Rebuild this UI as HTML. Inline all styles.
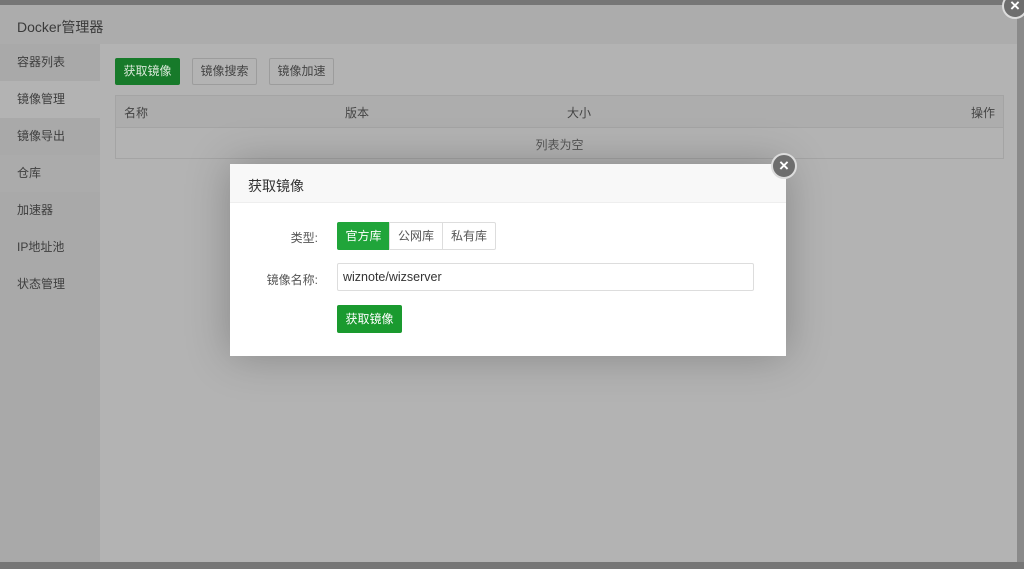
<!DOCTYPE html>
<html><head><meta charset="utf-8"><style>
*{margin:0;padding:0;box-sizing:border-box}
body{width:1024px;height:569px;overflow:hidden;background:#767676;font-family:"Liberation Sans","Noto Sans CJK SC",sans-serif;font-size:12px;color:#444;position:relative}
.panel{position:absolute;left:0;top:5px;width:1017px;height:557px;background:#b3b3b3}
.hdr{height:39px;background:#acacac;color:#3a3a3a;font-size:14px;padding:12px 0 0 17px}
.side{position:absolute;left:0;top:39px;width:100px;bottom:0;background:#a9a9a9}
.side div{height:37px;line-height:37px;padding-left:17px;color:#3e3e3e;font-size:12px}
.side .act{background:#b3b3b3}
.btn{position:absolute;height:27px;line-height:25px;border:1px solid #9c9c9c;border-radius:2px;color:#444;text-align:center;font-size:12px}
.tbl{position:absolute;left:115px;top:90px;width:889px;height:64px;border:1px solid #a4a4a4}
.th{height:32px;background:#adadad;border-bottom:1px solid #a4a4a4;position:relative}
.th span{position:absolute;top:8px;color:#444}
.right{position:absolute;left:1017px;top:5px;width:7px;height:557px;background:#8a8a8a}
.x{position:absolute;width:26px;height:26px;border-radius:50%;background:#6e6e6e;border:2px solid #ddd;color:#fff;font-size:17px;line-height:21px;text-align:center;font-weight:bold}
.modal{position:absolute;left:230px;top:164px;width:556px;height:192px;background:#fff;box-shadow:0 0 40px rgba(0,0,0,.25)}
.mh{height:39px;background:#f8f8f8;border-bottom:1px solid #eee;padding:12px 0 0 18px;font-size:14px;color:#333}
.lbl{position:absolute;right:468px;color:#555}
.seg{position:absolute;top:58px;height:28px;line-height:26px;border:1px solid #ddd;text-align:center;color:#555}
</style></head><body>
<div class="panel">
<div class="hdr">Docker管理器</div>
<div class="side"><div>容器列表</div><div class="act">镜像管理</div><div>镜像导出</div><div style="background:#ababab">仓库</div><div>加速器</div><div>IP地址池</div><div>状态管理</div></div>
<div class="btn" style="left:115px;top:53px;width:65px;background:#177a2a;border-color:#177a2a;color:#d8e8d8">获取镜像</div>
<div class="btn" style="left:192px;top:53px;width:65px">镜像搜索</div>
<div class="btn" style="left:269px;top:53px;width:65px">镜像加速</div>
<div class="tbl"><div class="th"><span style="left:8px">名称</span><span style="left:229px">版本</span><span style="left:451px">大小</span><span style="right:8px">操作</span></div>
<div style="text-align:center;padding-top:8px;color:#555">列表为空</div></div>
</div>
<div class="right"></div>
<div class="x" style="left:1002px;top:-7px">×</div>
<div class="modal">
<div class="mh">获取镜像</div>
<div class="lbl" style="top:65px">类型:</div>
<div class="seg" style="left:107px;width:53px;background:#20a53a;border-color:#20a53a;color:#fff;border-radius:2px 0 0 2px">官方库</div>
<div class="seg" style="left:159px;width:54px">公网库</div>
<div class="seg" style="left:212px;width:54px;border-radius:0 2px 2px 0">私有库</div>
<div class="lbl" style="top:107px">镜像名称:</div>
<div style="position:absolute;left:107px;top:99px;width:417px;height:28px;border:1px solid #ddd;border-radius:2px;padding:6px 0 0 5px;font-size:12.5px;color:#333">wiznote/wizserver</div>
<div style="position:absolute;left:107px;top:141px;width:65px;height:28px;line-height:28px;background:#1a9a2f;border-radius:2px;color:#fff;text-align:center">获取镜像</div>
</div>
<div class="x" style="left:771px;top:153px">×</div>
</body></html>
